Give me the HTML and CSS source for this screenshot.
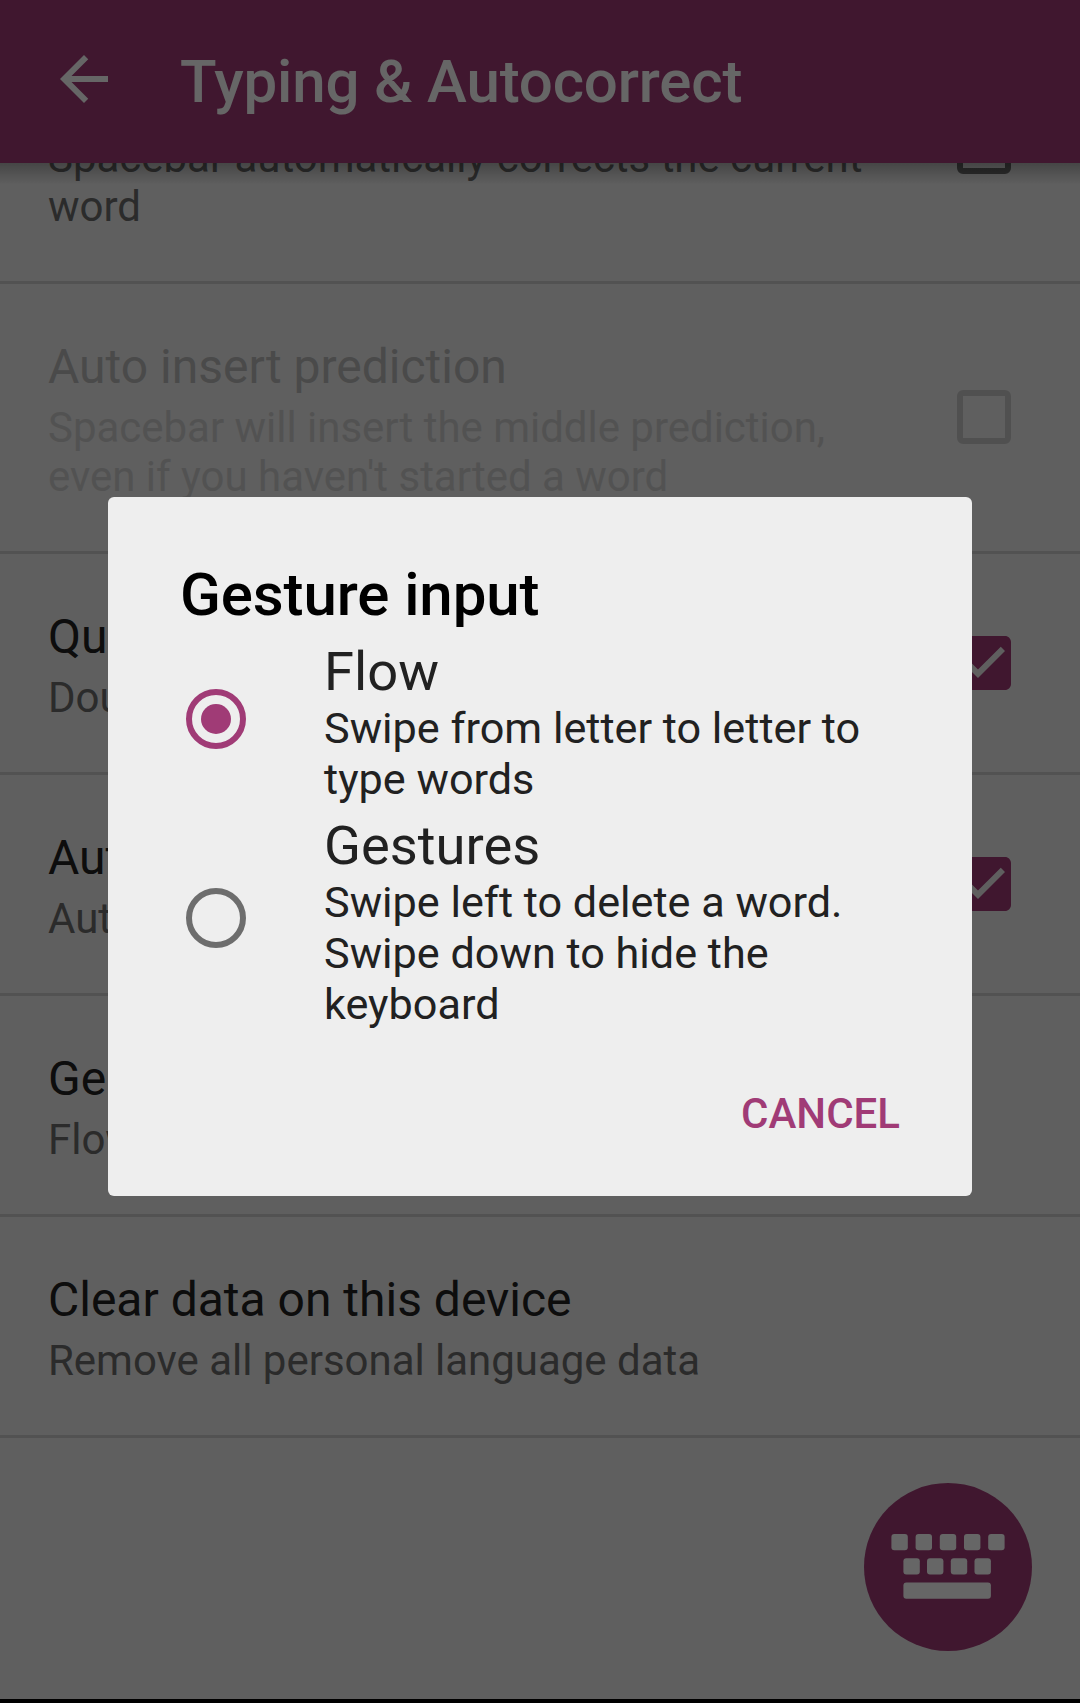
FILE: index.html
```html
<!DOCTYPE html>
<html lang="en">
<head>
<meta charset="utf-8">
<title>Typing &amp; Autocorrect</title>
<link rel="stylesheet" href="styles.css">
</head>
<body>
<div class="screen">
  <header class="app-bar">
    <svg class="back" viewBox="0 0 24 24"><path d="M20 11H7.83l5.59-5.59L12 4l-8 8 8 8 1.41-1.41L7.83 13H20v-2z"/></svg>
    <h1 class="app-title">Typing &amp; Autocorrect</h1>
  </header>
  <main class="prefs">
    <div class="pref pref-scrolled">
      <div class="pref-text">
        <p class="pref-summary">Spacebar automatically corrects the current word</p>
      </div>
      <span class="checkbox"></span>
    </div>
    <div class="pref pref-disabled">
      <div class="pref-text">
        <h2 class="pref-title">Auto insert prediction</h2>
        <p class="pref-summary">Spacebar will insert the middle prediction, even if you haven't started a word</p>
      </div>
      <span class="checkbox"></span>
    </div>
    <div class="pref">
      <div class="pref-text">
        <h2 class="pref-title">Quick period</h2>
        <p class="pref-summary">Double tap space to insert period</p>
      </div>
      <svg class="checked" viewBox="3 3 18 18"><path d="M19 3H5c-1.11 0-2 .9-2 2v14c0 1.1.89 2 2 2h14c1.11 0 2-.9 2-2V5c0-1.1-.89-2-2-2zm-9 14l-5-5 1.41-1.41L10 14.17l7.59-7.59L19 8l-9 9z"/></svg>
    </div>
    <div class="pref">
      <div class="pref-text">
        <h2 class="pref-title">Auto capitalize</h2>
        <p class="pref-summary">Automatically capitalize sentences</p>
      </div>
      <svg class="checked" viewBox="3 3 18 18"><path d="M19 3H5c-1.11 0-2 .9-2 2v14c0 1.1.89 2 2 2h14c1.11 0 2-.9 2-2V5c0-1.1-.89-2-2-2zm-9 14l-5-5 1.41-1.41L10 14.17l7.59-7.59L19 8l-9 9z"/></svg>
    </div>
    <div class="pref">
      <div class="pref-text">
        <h2 class="pref-title">Gesture input</h2>
        <p class="pref-summary">Flow</p>
      </div>
    </div>
    <div class="pref">
      <div class="pref-text">
        <h2 class="pref-title">Clear data on this device</h2>
        <p class="pref-summary">Remove all personal language data</p>
      </div>
    </div>
  </main>
  <div class="nav-edge"></div>
  <div class="fab">
    <svg class="fab-icon" viewBox="0 0 168 168">
      <rect x="27.4" y="51" width="16.4" height="16.2" rx="3"/>
      <rect x="51.6" y="51" width="16.4" height="16.2" rx="3"/>
      <rect x="75.8" y="51" width="16.4" height="16.2" rx="3"/>
      <rect x="100" y="51" width="16.4" height="16.2" rx="3"/>
      <rect x="124.2" y="51" width="16.4" height="16.2" rx="3"/>
      <rect x="39.4" y="75.2" width="16.4" height="16.2" rx="3"/>
      <rect x="63" y="75.2" width="16.4" height="16.2" rx="3"/>
      <rect x="86.8" y="75.2" width="16.4" height="16.2" rx="3"/>
      <rect x="110.5" y="75.2" width="16.4" height="16.2" rx="3"/>
      <rect x="39.4" y="99.4" width="87.5" height="16.4" rx="3"/>
    </svg>
  </div>
</div>
<div class="scrim">
  <section class="dialog">
    <h2 class="dialog-title">Gesture input</h2>
    <div class="options">
      <div class="option">
        <span class="radio radio-on"></span>
        <div>
          <h3 class="option-title">Flow</h3>
          <p class="option-text">Swipe from letter to letter to type words</p>
        </div>
      </div>
      <div class="option option-last">
        <span class="radio"></span>
        <div>
          <h3 class="option-title">Gestures</h3>
          <p class="option-text">Swipe left to delete a word. Swipe down to hide the keyboard</p>
        </div>
      </div>
    </div>
    <button class="cancel">CANCEL</button>
  </section>
</div>
</body>
</html>
```
FILE: styles.css
```css
* { box-sizing: border-box; }

body {
  margin: 0;
  font-family: Roboto, sans-serif;
  color: #212121;
}

h1, h2, h3, p { margin: 0; font-weight: 400; }

.screen {
  position: relative;
  display: flex;
  flex-direction: column;
  height: 1703px;
  overflow: hidden;
  background: #eee;
}

/* App bar */
.app-bar {
  position: relative;
  display: flex;
  flex: none;
  align-items: center;
  gap: 60px;
  height: 163px;
  padding-left: 48px;
  background: #a03b76;
}

.app-bar::after {
  content: "";
  position: absolute;
  inset: 100% 0 auto;
  height: 22px;
  background: linear-gradient(rgba(0, 0, 0, .27), rgba(0, 0, 0, .1) 60%, transparent);
}

.back {
  width: 72px;
  height: 72px;
  margin-bottom: 5px;
  fill: #fff;
}

.app-title {
  color: #fff;
  font-size: 60px;
  font-weight: 500;
  line-height: 70px;
  letter-spacing: -.15px;
}

/* Preference list */
.prefs { flex: 1; }

.pref {
  display: flex;
  align-items: center;
  justify-content: space-between;
  padding: 54px 69px 50px 48px;
  border-bottom: 3px solid #ccc;
}

.pref-text { width: 840px; }

.pref-title {
  margin-bottom: 8px;
  font-size: 48px;
  line-height: 57px;
}

.pref-summary {
  color: #6c6c6c;
  font-size: 42px;
  line-height: 49px;
  letter-spacing: -.02px;
}

.pref-scrolled {
  align-items: flex-end;
  height: 121px;
  padding-top: 0;
  overflow: hidden;
}

.checkbox {
  flex: none;
  width: 54px;
  height: 54px;
  margin-bottom: 5px;
  border: 6px solid #6c6c6c;
  border-radius: 6px;
}

.pref-scrolled .checkbox { margin-bottom: 57px; }

.pref-disabled .pref-title { color: #b8b8b8; }
.pref-disabled .pref-summary { color: #cdcdcd; }
.pref-disabled .checkbox { border-color: #c9c9c9; }

.checked {
  flex: none;
  width: 54px;
  height: 54px;
  margin-bottom: 4px;
  fill: #a03b76;
}

.nav-edge {
  flex: none;
  height: 4px;
  background: #000;
}

.fab {
  position: absolute;
  right: 48px;
  bottom: 52px;
  width: 168px;
  height: 168px;
  border-radius: 50%;
  background: #a03b76;
}

.fab-icon { display: block; fill: #fff; }

/* Dialog */
.scrim {
  position: fixed;
  inset: 0;
  display: flex;
  align-items: center;
  justify-content: center;
  padding-bottom: 10px;
  background: rgba(0, 0, 0, .6);
}

.dialog {
  display: flex;
  flex-direction: column;
  width: 864px;
  height: 699px;
  padding: 63px 72px 58px;
  border-radius: 6px;
  background: #eee;
}

.dialog-title {
  color: #000;
  font-size: 60px;
  font-weight: 500;
  line-height: 70px;
  letter-spacing: -.1px;
}

.options { margin-top: 3px; }

.option {
  display: flex;
  align-items: center;
  gap: 78px;
  padding: 7px 0 0 6px;
}

.option-last { padding: 9px 0 1px 6px; }

.option-title {
  font-size: 54.3px;
  line-height: 63px;
}

.option-text {
  width: 560px;
  font-size: 43.2px;
  line-height: 51px;
}

.radio {
  display: grid;
  flex: none;
  place-items: center;
  width: 60px;
  height: 60px;
  margin-bottom: 7px;
  border: 6px solid #6d6d6d;
  border-radius: 50%;
}

.option-last .radio { margin-bottom: 8px; }

.radio-on { border-color: #a03b76; }

.radio-on::before {
  content: "";
  width: 30px;
  height: 30px;
  border-radius: 50%;
  background: #a03b76;
}

.cancel {
  align-self: flex-end;
  margin-top: auto;
  padding: 0;
  border: 0;
  background: none;
  color: #a03b76;
  font: 500 42px/49px Roboto, sans-serif;
}
```
